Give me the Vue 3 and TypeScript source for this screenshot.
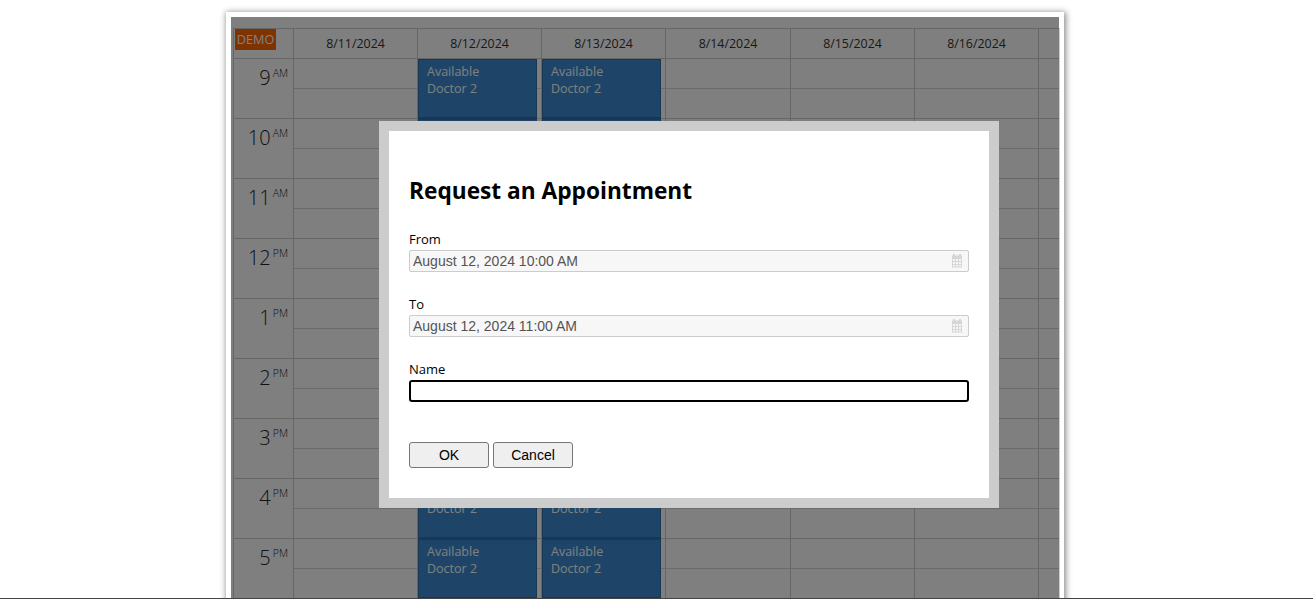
<script setup lang="ts">
const days = ['8/11/2024', '8/12/2024', '8/13/2024', '8/14/2024', '8/15/2024', '8/16/2024']

const hours = [
  { hour: '9', suffix: 'AM' },
  { hour: '10', suffix: 'AM' },
  { hour: '11', suffix: 'AM' },
  { hour: '12', suffix: 'PM' },
  { hour: '1', suffix: 'PM' },
  { hour: '2', suffix: 'PM' },
  { hour: '3', suffix: 'PM' },
  { hour: '4', suffix: 'PM' },
  { hour: '5', suffix: 'PM' },
]

const hasEvent = (dayIndex: number) => dayIndex === 1 || dayIndex === 2
</script>

<template>
  <div class="page">
    <div class="frame">
      <div class="calendar">
        <div class="corner"><span class="demo">DEMO</span></div>
        <div v-for="day in days" :key="day" class="day-head">{{ day }}</div>
        <div class="day-head day-head--rest"></div>

        <template v-for="row in hours" :key="row.hour + row.suffix">
          <div class="hour">
            <span class="hour__num">{{ row.hour }}</span>
            <span class="hour__suffix">{{ row.suffix }}</span>
          </div>
          <div v-for="(day, i) in days" :key="day" class="cell">
            <div class="cell__half"></div>
            <div class="cell__half"></div>
            <div v-if="hasEvent(i)" class="event">Available<br />Doctor 2</div>
          </div>
          <div class="cell cell--rest">
            <div class="cell__half"></div>
            <div class="cell__half"></div>
          </div>
        </template>
      </div>
      <div class="shade"></div>
    </div>

    <div class="modal">
      <h1 class="modal__title">Request an Appointment</h1>

      <label class="field">
        <span class="field__label">From</span>
        <span class="date-input">
          August 12, 2024 10:00 AM
          <svg class="date-input__icon" viewBox="0 0 12 14" width="12" height="14">
            <path d="M2 0h2v2H2zM8 0h2v2H8z" fill="#d6d6d6" />
            <path
              fill="#d6d6d6"
              fill-rule="evenodd"
              d="M1 1.500h10v12H1zM2 5v2h2V5zm3 0v2h2V5zm3 0v2h2V5zM2 8v2h2V8zm3 0v2h2V8zm3 0v2h2V8zM2 11v1.500h2V11zm3 0v1.500h2V11zm3 0v1.500h2V11z"
            />
          </svg>
        </span>
      </label>

      <label class="field">
        <span class="field__label">To</span>
        <span class="date-input">
          August 12, 2024 11:00 AM
          <svg class="date-input__icon" viewBox="0 0 12 14" width="12" height="14">
            <path d="M2 0h2v2H2zM8 0h2v2H8z" fill="#d6d6d6" />
            <path
              fill="#d6d6d6"
              fill-rule="evenodd"
              d="M1 1.500h10v12H1zM2 5v2h2V5zm3 0v2h2V5zm3 0v2h2V5zM2 8v2h2V8zm3 0v2h2V8zm3 0v2h2V8zM2 11v1.500h2V11zm3 0v1.500h2V11zm3 0v1.500h2V11z"
            />
          </svg>
        </span>
      </label>

      <label class="field">
        <span class="field__label">Name</span>
        <span class="name-input"></span>
      </label>

      <div class="actions">
        <button class="btn" type="button">OK</button>
        <button class="btn" type="button">Cancel</button>
      </div>
    </div>

    <div class="bottom-line"></div>
  </div>
</template>

<style>
html,
body {
  margin: 0;
  background: #fff;
  overflow: hidden;
}
</style>

<style scoped>
.page {
  position: relative;
  height: 599px;
  overflow: hidden;
  font-family: 'Open Sans', 'Noto Sans', sans-serif;
}

.frame {
  position: relative;
  box-sizing: border-box;
  width: 838px;
  height: 640px;
  margin: 12px 0 0 226px;
  border: 5px solid #fff;
  box-shadow: 1px 1px 6px 1px rgba(0, 0, 0, 0.45);
}

.calendar {
  display: grid;
  grid-template-columns: 61px 124px 124px 124px 125px 124px 124px 21px;
  grid-template-rows: 31px;
  grid-auto-rows: 60px;
  padding: 11px 0 0 2px;
  font-size: 12.4px;
  color: #333;
  background: #fff;
}

.corner {
  border: 1px solid #ccc;
}

.demo {
  display: block;
  width: 41px;
  height: 21px;
  margin-left: 1px;
  background: #ff6600;
  color: #fff;
  font-size: 12.7px;
  line-height: 21px;
  text-align: center;
}

.day-head {
  box-sizing: border-box;
  border: solid #ccc;
  border-width: 1px 1px 1px 0;
  text-align: center;
  line-height: 30px;
}

.hour {
  box-sizing: border-box;
  display: flex;
  justify-content: flex-end;
  border: solid #ccc;
  border-width: 0 1px 1px;
  padding: 5px 5px 0 0;
  color: #222;
}

.hour__num {
  font-size: 20px;
  font-weight: 300;
  line-height: 28px;
}

.hour__suffix {
  font-size: 10.5px;
  font-weight: 300;
  line-height: 18px;
  margin-left: 2px;
}

.cell {
  position: relative;
  box-sizing: border-box;
  display: flex;
  flex-direction: column;
  border-right: 1px solid #ccc;
  border-bottom: 1px solid #ccc;
}

.cell__half {
  flex: 1;
}

.cell__half:first-child {
  border-bottom: 1px solid #d4d4d4;
}

.event {
  position: absolute;
  top: 0;
  left: 0;
  right: 4px;
  bottom: -1px;
  box-sizing: border-box;
  padding: 3px 8px;
  background: #3d8bd0;
  border: 1px solid #2f6fa8;
  border-width: 1px 1px 2px;
  color: #fff;
  font-size: 12.5px;
  line-height: 17px;
}

.shade {
  position: absolute;
  inset: 0;
  background: rgba(0, 0, 0, 0.5);
}

.modal {
  position: absolute;
  top: 121px;
  left: 379px;
  box-sizing: border-box;
  width: 620px;
  height: 387px;
  padding: 0 20px;
  background: #fff;
  border: 10px solid #ccc;
  color: #000;
  font-size: 13px;
}

.modal__title {
  margin: 44px 0 21px;
  font-size: 22.7px;
  line-height: 32px;
  font-weight: 700;
}

.field {
  display: block;
  margin-bottom: 21px;
}

.field__label {
  display: block;
  line-height: 22px;
}

.date-input,
.name-input {
  position: relative;
  display: block;
  box-sizing: border-box;
  width: 560px;
  height: 22px;
  font-family: 'Liberation Sans', Arial, sans-serif;
}

.date-input {
  padding: 0 3px;
  border: 1px solid #ccc;
  border-radius: 2px;
  background: #f7f7f7;
  color: #545454;
  font-size: 14px;
  line-height: 20px;
}

.date-input__icon {
  position: absolute;
  top: 3px;
  right: 5px;
}

.name-input {
  border: 2px solid #000;
  border-radius: 3px;
  background: #fff;
}

.actions {
  display: flex;
  gap: 4px;
  margin-top: 40px;
}

.btn {
  box-sizing: border-box;
  width: 80px;
  height: 26px;
  padding: 0;
  background: #efefef;
  border: 1px solid #767676;
  border-radius: 3px;
  color: #000;
  font-family: 'Liberation Sans', Arial, sans-serif;
  font-size: 14px;
}

.bottom-line {
  position: absolute;
  left: 0;
  right: 0;
  bottom: 0;
  height: 1px;
  background: #444;
}
</style>
